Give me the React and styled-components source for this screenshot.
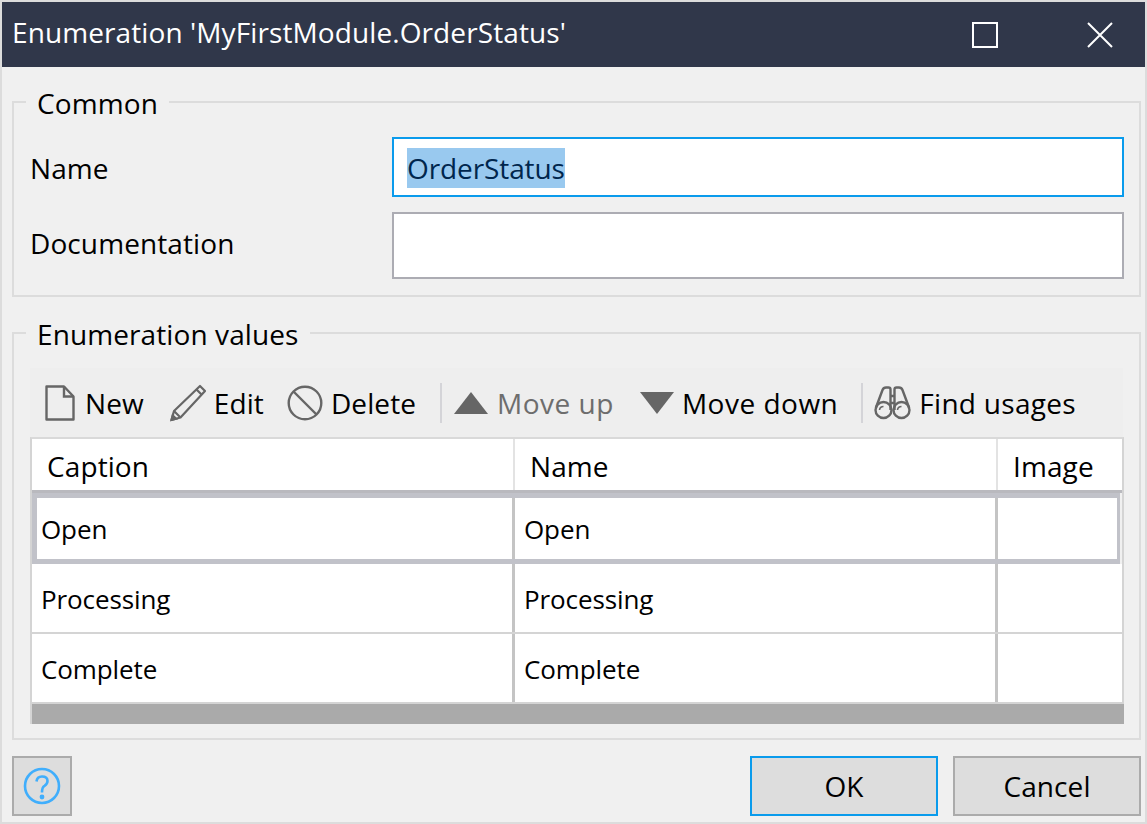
import React from "react";
import styled, { createGlobalStyle } from "styled-components";

const GlobalStyle = createGlobalStyle`
  html, body {
    margin: 0;
    padding: 0;
    background: #f0f0f0;
  }
  * {
    box-sizing: border-box;
  }
`;

const Window = styled.div`
  width: 1147px;
  height: 824px;
  display: flex;
  flex-direction: column;
  border: 2px solid #dcdcdc;
  background: #f0f0f0;
  color: #000;
  font-family: "Open Sans", "Noto Sans", sans-serif;
  font-size: 28px;
  letter-spacing: 0.1px;
  overflow: hidden;
`;

const TitleBar = styled.div`
  height: 65px;
  flex: none;
  display: flex;
  align-items: center;
  padding: 0 32px 0 10px;
  background: #30374a;
  color: #fff;
`;

const TitleText = styled.div`
  flex: 1;
  margin-top: -6px;
`;

const TitleIcon = styled.svg`
  width: 26px;
  height: 26px;
  margin-left: 89px;
  display: block;
`;

const Content = styled.div`
  flex: 1;
  display: flex;
  flex-direction: column;
  padding: 17px 4px 0 10px;
`;

const Group = styled.fieldset`
  margin: 0;
  min-width: 0;
  border: 2px solid #dcdcdc;
  padding: ${(p) => p.$padding};
  height: ${(p) => p.$height}px;
  margin-top: ${(p) => p.$top || 0}px;
`;

const GroupTitle = styled.legend`
  margin-left: -4px;
  padding: 0 11px 0 11px;
  height: 36px;
  line-height: 38px;
`;

const FormRow = styled.div`
  display: grid;
  grid-template-columns: 362px 732px;
  align-items: center;
  margin-bottom: 15px;
`;

const Label = styled.label`
  display: block;
  margin-top: ${(p) => p.$nudge || 0}px;
`;

const TextBox = styled.div`
  height: ${(p) => p.$height}px;
  background: #fff;
  border: 2px solid ${(p) => (p.$focused ? "#0a9bec" : "#acacb3")};
  padding-left: 13px;
  display: flex;
  align-items: center;
`;

const Selected = styled.span`
  background: #99c9ef;
  color: #00264d;
  height: 40px;
  line-height: 40px;
  margin-top: 2px;
  letter-spacing: -0.1px;
`;

const Toolbar = styled.div`
  height: 69px;
  display: flex;
  align-items: center;
  padding-left: 14px;
  background: #eeeeee;
  margin-right: 1px;
`;

const ToolButton = styled.div`
  display: flex;
  align-items: center;
  gap: ${(p) => p.$gap || 8}px;
  margin-right: ${(p) => p.$right || 0}px;
  color: ${(p) => (p.$disabled ? "#6d6d6d" : "#000")};
  letter-spacing: ${(p) => p.$spacing || 0.1}px;
  white-space: nowrap;
`;

const ToolIcon = styled.svg`
  display: block;
  flex: none;
`;

const Separator = styled.div`
  width: 2px;
  height: 40px;
  background: #d4d4d8;
  margin: 0 ${(p) => p.$right}px 0 ${(p) => p.$left}px;
`;

const Table = styled.div`
  border-top: 2px solid #d9d9d9;
  border-left: 2px solid #d4d4d4;
  border-right: 2px solid #d4d4d4;
`;

const HeaderRow = styled.div`
  height: 54px;
  display: grid;
  grid-template-columns: 483px 483px 1fr;
  background: #fff;
  border-bottom: 3px solid #b9b9be;
`;

const HeaderCell = styled.div`
  display: flex;
  align-items: center;
  padding: 2px 0 0 15px;
  border-right: ${(p) => (p.$last ? "none" : "2px solid #e3e3e3")};
`;

const Row = styled.div`
  height: 70px;
  display: grid;
  grid-template-columns: 483px 483px 1fr;
  background: #fff;
  border-bottom: 2px solid #d4d4d4;
  ${(p) =>
    p.$selected &&
    `
    height: 71px;
    border: 5px solid #c1c2c9;
    border-right-width: 3px;
    margin-right: 2px;
    grid-template-columns: 478px 483px 1fr;
  `}
`;

const Cell = styled.div`
  display: flex;
  align-items: center;
  padding-left: ${(p) => (p.$first && p.$selected ? 4 : 9)}px;
  padding-top: ${(p) => (p.$selected ? 0 : 2)}px;
  font-size: 26px;
  letter-spacing: -0.1px;
  border-right: ${(p) => (p.$last ? "none" : "3px solid #c4c4c4")};
`;

const ScrollBar = styled.div`
  height: 20px;
  background: #aaaaaa;
  margin-right: -2px;
`;

const Footer = styled.div`
  display: flex;
  justify-content: flex-end;
  gap: 15px;
  margin-top: 16px;
`;

const Button = styled.div`
  width: ${(p) => p.$width}px;
  height: 60px;
  display: flex;
  align-items: center;
  justify-content: center;
  background: #dddddd;
  border: 2px solid ${(p) => (p.$focused ? "#0a9bec" : "#ababab")};
`;

const HelpButton = styled(Button)`
  margin-right: auto;
`;

const rows = [
  ["Open", "Open"],
  ["Processing", "Processing"],
  ["Complete", "Complete"],
];

const NewIcon = () => (
  <ToolIcon width="32" height="38" viewBox="0 0 32 38" fill="none" stroke="#666" strokeWidth="2.4">
    <path d="M2.5 2.5H20L29.5 12.5V35.5H2.5Z" strokeLinejoin="round" />
    <path d="M20 2.5V12.5H29.5" />
  </ToolIcon>
);

const PencilIcon = () => (
  <ToolIcon width="38" height="38" viewBox="0 0 38 38" fill="none" stroke="#666" strokeWidth="2.2">
    <path d="M31 2L36 7L11.5 33.5L2.5 36L5 27Z" strokeLinejoin="round" />
    <path d="M27.5 5.5L32.5 10.5M5 27L11.5 33.5" />
    <path d="M2.5 36L3.7 31.5L7 34.8Z" fill="#666" />
  </ToolIcon>
);

const BanIcon = () => (
  <ToolIcon width="36" height="36" viewBox="0 0 36 36" fill="none" stroke="#666" strokeWidth="2.4">
    <circle cx="18" cy="18" r="16.3" />
    <path d="M6.5 6.5L29.5 29.5" />
  </ToolIcon>
);

const UpIcon = () => (
  <ToolIcon width="36" height="22" viewBox="0 0 36 22">
    <path d="M18 0L35 22H1Z" fill="#666" />
  </ToolIcon>
);

const DownIcon = () => (
  <ToolIcon width="36" height="22" viewBox="0 0 36 22">
    <path d="M1 0H35L18 22Z" fill="#666" />
  </ToolIcon>
);

const BinocularsIcon = () => (
  <ToolIcon width="37" height="34" viewBox="0 0 37 34" fill="none" stroke="#666" strokeWidth="2.4">
    <circle cx="9.5" cy="24" r="8" />
    <circle cx="27.5" cy="24" r="8" />
    <path d="M1.8 22L8.5 4Q9.5 1.5 12 1.5H14.5Q16.5 1.5 16.5 3.5V24" />
    <path d="M35.2 22L28.5 4Q27.5 1.5 25 1.5H22.5Q20.5 1.5 20.5 3.5V24" />
    <path d="M16.5 10H20.5M16.5 17H20.5" />
    <path d="M5.5 24Q6 20.5 9.5 20.5M23.5 24Q24 20.5 27.5 20.5" strokeWidth="1.6" />
  </ToolIcon>
);

const HelpIcon = () => (
  <svg width="38" height="38" viewBox="0 0 38 38" fill="none" stroke="#40aefc" strokeWidth="2.6">
    <circle cx="19" cy="19" r="17" />
    <path d="M13.5 14.5Q14 9.5 19 9.5Q24.5 9.5 24.5 14Q24.5 17 21.5 18.8Q19 20 19 25.5" />
    <circle cx="19" cy="30" r="2.4" fill="#40aefc" stroke="none" />
  </svg>
);

export default function App() {
  return (
    <Window>
      <GlobalStyle />
      <TitleBar>
        <TitleText>Enumeration 'MyFirstModule.OrderStatus'</TitleText>
        <TitleIcon viewBox="0 0 26 26" fill="none" stroke="#fff" strokeWidth="2">
          <rect x="1" y="1" width="24" height="24" />
        </TitleIcon>
        <TitleIcon viewBox="0 0 26 26" fill="none" stroke="#fff" strokeWidth="2">
          <path d="M1 1L25 25M25 1L1 25" />
        </TitleIcon>
      </TitleBar>
      <Content>
        <Group $height={213} $padding="17px 0 0 16px">
          <GroupTitle>Common</GroupTitle>
          <FormRow>
            <Label $nudge={2}>Name</Label>
            <TextBox $height={60} $focused>
              <Selected>OrderStatus</Selected>
            </TextBox>
          </FormRow>
          <FormRow>
            <Label $nudge={-6}>Documentation</Label>
            <TextBox $height={67} />
          </FormRow>
        </Group>
        <Group $height={425} $top={18} $padding="17px 15px 0 16px">
          <GroupTitle>Enumeration values</GroupTitle>
          <Toolbar>
            <ToolButton $gap={9} $right={25}>
              <NewIcon />
              New
            </ToolButton>
            <ToolButton $gap={7} $right={23}>
              <PencilIcon />
              Edit
            </ToolButton>
            <ToolButton>
              <BanIcon />
              Delete
            </ToolButton>
            <Separator $left={24} $right={11} />
            <ToolButton $disabled $right={25} $spacing={0.5}>
              <UpIcon />
              Move up
            </ToolButton>
            <ToolButton $gap={7} $spacing={0.5}>
              <DownIcon />
              Move down
            </ToolButton>
            <Separator $left={23} $right={11} />
            <ToolButton $spacing={0.3}>
              <BinocularsIcon />
              Find usages
            </ToolButton>
          </Toolbar>
          <Table>
            <HeaderRow>
              <HeaderCell>Caption</HeaderCell>
              <HeaderCell>Name</HeaderCell>
              <HeaderCell $last>Image</HeaderCell>
            </HeaderRow>
            {rows.map(([caption, name], i) => (
              <Row key={caption} $selected={i === 0}>
                <Cell $first $selected={i === 0}>{caption}</Cell>
                <Cell $selected={i === 0}>{name}</Cell>
                <Cell $last />
              </Row>
            ))}
            <ScrollBar />
          </Table>
        </Group>
        <Footer>
          <HelpButton $width={60}>
            <HelpIcon />
          </HelpButton>
          <Button $width={188} $focused>
            OK
          </Button>
          <Button $width={188}>Cancel</Button>
        </Footer>
      </Content>
    </Window>
  );
}
